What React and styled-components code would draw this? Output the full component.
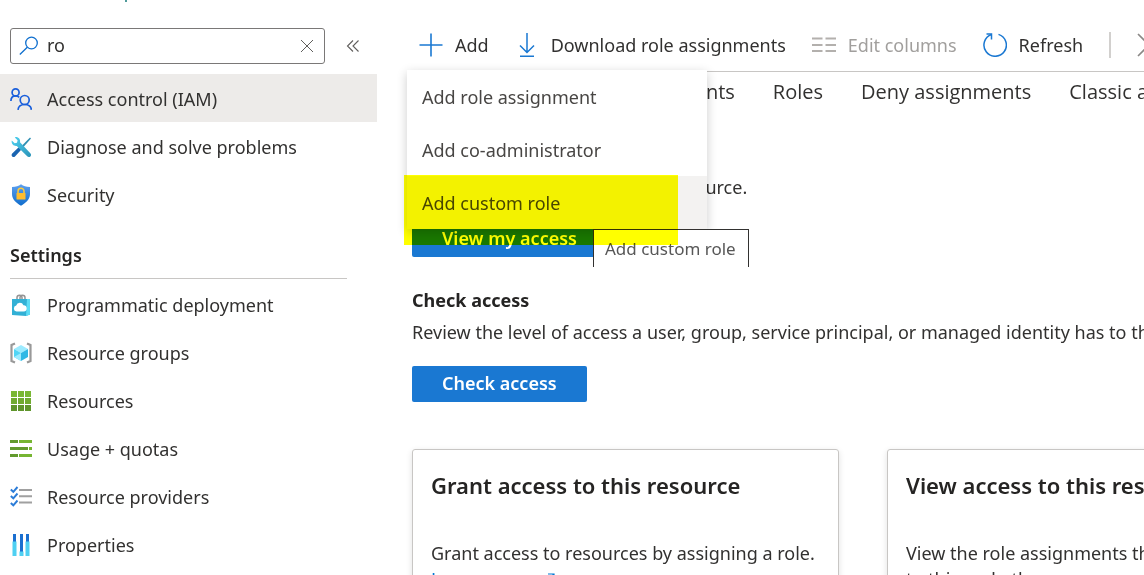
import { useState } from "react";
import styled, { createGlobalStyle } from "styled-components";

const GlobalStyle = createGlobalStyle`
  * {
    box-sizing: border-box;
  }
  body {
    margin: 0;
    background-color: #fff;
    color: #323130;
    font-family: "Noto Sans", "Open Sans", sans-serif;
    font-size: 18px;
    line-height: 26px;
  }
  button,
  input {
    font: inherit;
    color: inherit;
  }
  svg {
    display: block;
    flex: none;
  }
`;

const Page = styled.div`
  display: flex;
  height: 100vh;
  overflow: hidden;
`;

const Sidebar = styled.aside`
  flex: none;
  width: 377px;
`;

const TopEdge = styled.div`
  height: 28px;
  padding-left: 125px;
  &::before {
    content: "";
    display: block;
    width: 2px;
    height: 2px;
    background-color: #4f9a9a;
  }
`;

const SearchRow = styled.div`
  display: flex;
  align-items: center;
  gap: 21px;
  padding-left: 10px;
  margin-bottom: 10px;
`;

const SearchBox = styled.label`
  display: flex;
  align-items: center;
  width: 315px;
  height: 36px;
  padding: 0 10px 0 8px;
  border: 1px solid #7a7877;
  border-radius: 3px;
`;

const SearchInput = styled.input`
  flex: 1;
  min-width: 0;
  padding: 0 0 2px 8px;
  border: none;
  outline: none;
  background: none;
`;

const IconButton = styled.button`
  display: flex;
  padding: 0;
  border: none;
  background: none;
  cursor: pointer;
`;

const NavList = styled.ul`
  margin: 0;
  padding: 0;
  list-style: none;
`;

const NavLink = styled.a`
  display: flex;
  align-items: center;
  gap: 15px;
  height: 48px;
  padding: 1px 0 0 10px;
  color: inherit;
  text-decoration: none;
  background-color: ${(props) => (props.$active ? "#edebe9" : "transparent")};
`;

const NavHeading = styled.h2`
  margin: 0 30px 1px 10px;
  padding: 24px 0 10px;
  border-bottom: 1px solid #c8c6c4;
  font-size: 18px;
  font-weight: 600;
  line-height: 26px;
  color: #252423;
`;

const Main = styled.main`
  position: relative;
  flex: 1;
  min-width: 0;
  overflow: hidden;
  padding: 20px 0 0 35px;
`;

const Toolbar = styled.div`
  display: flex;
  align-items: center;
  gap: 26px;
  height: 52px;
  padding: 0 0 2px 7px;
  border-bottom: 1px solid #c8c6c4;
`;

const ToolButton = styled.button`
  display: flex;
  flex: none;
  align-items: center;
  gap: 12px;
  padding: 0;
  border: none;
  background: none;
  white-space: nowrap;
  cursor: pointer;
  &:disabled {
    color: #a19f9d;
    cursor: default;
  }
`;

const ToolDivider = styled.span`
  flex: none;
  width: 2px;
  height: 26px;
  background-color: #d2d0ce;
`;

const Tabs = styled.nav`
  display: flex;
  gap: 38px;
  height: 40px;
  align-items: center;
`;

const Tab = styled.a`
  flex: none;
  color: inherit;
  text-decoration: none;
  white-space: nowrap;
  font-family: "Open Sans", sans-serif;
  font-size: 20px;
`;

const Section = styled.section`
  padding-top: 30px;
`;

const SectionTitle = styled.h3`
  margin: 0 0 6px;
  font-size: 18px;
  font-weight: 700;
  line-height: 26px;
  color: #252423;
`;

const SectionText = styled.p`
  margin: 0 0 21px;
  white-space: nowrap;
`;

const PrimaryButton = styled.button`
  height: 36px;
  padding: 0 30px 2px;
  border: none;
  border-radius: 2px;
  background-color: #1a78d2;
  color: #fff;
  font-weight: 600;
  white-space: nowrap;
  cursor: pointer;
`;

const Cards = styled.div`
  display: flex;
  gap: 48px;
  padding-top: 47px;
`;

const Card = styled.article`
  flex: none;
  width: 427px;
  height: 240px;
  padding: 19px 18px;
  border: 1px solid #c8c6c4;
  border-radius: 3px;
  box-shadow: 0 2px 6px rgba(0, 0, 0, 0.12);
`;

const CardTitle = styled.h3`
  margin: 0 0 39px;
  font-size: 22px;
  font-weight: 600;
  line-height: 32px;
  white-space: nowrap;
  color: #252423;
`;

const CardText = styled.p`
  margin: 0;
`;

const CardLink = styled.a`
  display: flex;
  align-items: center;
  gap: 14px;
  color: #0078d4;
  text-decoration: none;
`;

const Menu = styled.div`
  position: absolute;
  top: 70px;
  left: 30px;
  width: 300px;
  background-color: #fff;
  box-shadow: 0 3px 10px rgba(0, 0, 0, 0.2);
`;

const MenuItem = styled.button`
  display: block;
  width: 100%;
  height: 53px;
  padding: 0 15px;
  border: none;
  color: #484644;
  text-align: left;
  cursor: pointer;
  background-color: ${(props) => (props.$active ? "#f3f2f1" : "#fff")};
`;

const Tooltip = styled.div`
  position: absolute;
  top: 229px;
  left: 216px;
  width: 156px;
  height: 38px;
  padding: 6px 0 0 11px;
  border: 1px solid #323130;
  border-bottom: none;
  background-color: #fff;
  color: #575757;
  font-size: 17px;
  white-space: nowrap;
`;

const Marker = styled.div`
  position: absolute;
  top: 175px;
  left: 27px;
  width: 274px;
  height: 70px;
  background-color: #ff0;
  mix-blend-mode: multiply;
  pointer-events: none;
`;

const SearchIcon = () => (
  <svg width="20" height="20" viewBox="0 0 20 20" fill="none" stroke="#0f6fce" strokeWidth="1.3">
    <circle cx="12.5" cy="7" r="5.8" />
    <path d="M8.3 11.2L.8 18.5" />
  </svg>
);

const ClearIcon = () => (
  <svg width="14" height="14" viewBox="0 0 14 14" fill="none" stroke="#605e5c" strokeWidth="1">
    <path d="M1 1l12 12M13 1L1 13" />
  </svg>
);

const CollapseIcon = () => (
  <svg width="14" height="14" viewBox="0 0 14 14" fill="none" stroke="#605e5c" strokeWidth="1.1">
    <path d="M7 1.5L1.5 7 7 12.5M12.5 1.5L7 7l5.5 5.5" />
  </svg>
);

const PeopleIcon = () => (
  <svg width="22" height="22" viewBox="0 0 22 22" fill="none" stroke="#1a5fdb" strokeWidth="1.7">
    <circle cx="5.6" cy="4.4" r="3.5" />
    <path d="M.9 13C1 9.7 3 7.9 5.6 7.9c1.5 0 2.7.5 3.6 1.4" />
    <circle cx="14.7" cy="12" r="4.5" />
    <path d="M8 21.8c.3-3.3 3-5.3 6.7-5.3s6.4 2 6.7 5.3" />
  </svg>
);

const ToolsIcon = () => (
  <svg width="22" height="22" viewBox="0 0 22 22">
    <defs>
      <linearGradient id="wrench" x1="0" y1="0" x2="1" y2="1">
        <stop offset="0" stopColor="#4fd3f2" />
        <stop offset="1" stopColor="#2b93b8" />
      </linearGradient>
    </defs>
    <path d="M20 1.5l1 1-7.7 8.7-1.5-1.5z" fill="#2f8fb3" />
    <path d="M8.7 11.2l2.5 2.5-6.2 6.7c-.8.8-2 .8-2.8 0s-.8-2 0-2.8z" fill="#1b64b0" />
    <path
      d="M5.6.9c2.9-.2 5.1 2.4 4.4 5.4l10.3 10.9c1 1 1 2.3.1 3.2s-2.300.9-3.200-.1L6.800 9.900C4 10.400 1.500 8.300 1.600 5.300l.2-.9 2.900 2.800 2.300-.5.600-2.400L4.800 1.400z"
      fill="url(#wrench)"
    />
  </svg>
);

const ShieldIcon = () => (
  <svg width="22" height="22" viewBox="0 0 22 22">
    <defs>
      <linearGradient id="shield" x1="0" y1="0" x2="0" y2="1">
        <stop offset="0" stopColor="#5ea0ef" />
        <stop offset="1" stopColor="#0f6dcc" />
      </linearGradient>
    </defs>
    <path
      d="M11 .3c2.5 1.8 5 2.5 9 2.6v7.2c0 5.5-4.5 9-9 11.7-4.5-2.7-9-6.2-9-11.7V2.900C6 2.800 8.500 2.100 11 .3z"
      fill="url(#shield)"
    />
    <path d="M8 9.5V7.2a3 3 0 0 1 6 0v2.3" fill="none" stroke="#ffca3a" strokeWidth="1.5" />
    <rect x="6.5" y="9" width="9" height="6.5" rx=".6" fill="#ffbd2e" />
  </svg>
);

const BagIcon = () => (
  <svg width="22" height="22" viewBox="0 0 22 22">
    <path d="M7 6V3.5C7 .4 12 .4 12 3.5V6M10 6V3.5c0-3.1 5-3.1 5 0V6" fill="none" stroke="#949494" strokeWidth="1.5" />
    <path d="M2 5h18v15.500L16 22 2 21z" fill="#32b0d5" />
    <path d="M17 5h3v15.500L16 22z" fill="#5cdcf5" />
    <path d="M6.500 17.500a3 3 0 0 1-.3-5.900 3.800 3.800 0 0 1 7.200-.3 3.100 3.100 0 0 1 .4 6.200z" fill="#fff" />
  </svg>
);

const GroupIcon = () => (
  <svg width="22" height="22" viewBox="0 0 22 22">
    <path d="M5 1.500L1.500 3v16L5 20.500M17 1.500L20.500 3v16L17 20.500" fill="none" stroke="#999" strokeWidth="2.2" />
    <path d="M11 3l7 4-7 4-7-4z" fill="#9cebff" />
    <path d="M4 7l7 4v8l-7-4z" fill="#50d5f5" />
    <path d="M18 7l-7 4v8l7-4z" fill="#32b8e5" />
    <path d="M4 15l7-4v8z" fill="#9cebff" />
  </svg>
);

const GridIcon = () => (
  <svg width="22" height="22" viewBox="0 0 22 22">
    <path d="M1 1h6v6H1zM8 1h6v6H8zM15 1h6v6h-6z" fill="#79b733" />
    <path d="M1 8h6v6H1zM8 8h6v6H8zM15 8h6v6h-6z" fill="#70aa30" />
    <path d="M1 15h6v6H1zM8 15h6v6H8zM15 15h6v6h-6z" fill="#5f952c" />
  </svg>
);

const QuotaIcon = () => (
  <svg width="22" height="22" viewBox="0 0 22 22">
    <path d="M0 2h8v3H0zM0 9h18v3H0zM0 16h8v3H0z" fill="#629a2d" />
    <path d="M9 2h13v3H9zM19 9h3v3h-3zM9 16h13v3H9z" fill="#76b532" />
  </svg>
);

const ProvidersIcon = () => (
  <svg width="22" height="22" viewBox="0 0 22 22" fill="none">
    <path d="M.8 3.500l2.500 2.300L7.500 1M.8 10l2.500 2.300 4.200-4.800M.8 17l2.500 2.300 4.200-4.800" stroke="#2b7cd8" strokeWidth="1.9" />
    <path d="M9 4h13M9 10.200h13M9 16.500h13" stroke="#a0a0a0" strokeWidth="2" />
  </svg>
);

const PropertiesIcon = () => (
  <svg width="22" height="22" viewBox="0 0 22 22">
    <path d="M3 0h3v8H3zM10 0h3v18h-3zM16 0h3v8h-3z" fill="#1a6fd0" />
    <path d="M2.500 7.500h4V22h-4zM9.500 17.500h4V22h-4zM15.500 7.500h4V22h-4z" fill="#4fd0f2" />
  </svg>
);

const PlusIcon = () => (
  <svg width="24" height="24" viewBox="0 0 24 24" fill="none" stroke="#1a78d2" strokeWidth="1.6">
    <path d="M12 .5v23M.5 12h23" />
  </svg>
);

const DownloadIcon = () => (
  <svg width="24" height="24" viewBox="0 0 24 24" fill="none" stroke="#1a78d2" strokeWidth="1.5">
    <path d="M12 0v19M5 12.500l7 7 7-7M5 23.200h14" />
  </svg>
);

const ColumnsIcon = () => (
  <svg width="24" height="24" viewBox="0 0 24 24" fill="none" stroke="#b3b0ad" strokeWidth="1.8">
    <path d="M0 5.500h10.500M13.500 5.500H24M0 12h10.500M13.500 12H24M0 18h10.500M13.500 18H24" />
  </svg>
);

const RefreshIcon = () => (
  <svg width="24" height="24" viewBox="0 0 24 24" fill="none" stroke="#1a78d2" strokeWidth="1.5">
    <path d="M15.500 1.400A11.200 11.200 0 1 1 8.500 1.500" />
    <path d="M3.500 1h5v5.500" />
  </svg>
);

const ChevronIcon = () => (
  <svg width="14" height="26" viewBox="0 0 14 26" fill="none" stroke="#8a8886" strokeWidth="1.6">
    <path d="M1 2l11 11L1 24" />
  </svg>
);

const ExternalIcon = () => (
  <svg width="12" height="12" viewBox="0 0 12 12" fill="none" stroke="#0078d4" strokeWidth="1.2">
    <path d="M5 1h6v6M11 1L4 8M3 4H1v7h7V9" />
  </svg>
);

const topLinks = [
  { label: "Access control (IAM)", Icon: PeopleIcon, active: true },
  { label: "Diagnose and solve problems", Icon: ToolsIcon },
  { label: "Security", Icon: ShieldIcon },
];

const settingsLinks = [
  { label: "Programmatic deployment", Icon: BagIcon },
  { label: "Resource groups", Icon: GroupIcon },
  { label: "Resources", Icon: GridIcon },
  { label: "Usage + quotas", Icon: QuotaIcon },
  { label: "Resource providers", Icon: ProvidersIcon },
  { label: "Properties", Icon: PropertiesIcon },
];

const tabs = ["Check access", "Role assignments", "Roles", "Deny assignments", "Classic administrators"];

const menuItems = ["Add role assignment", "Add co-administrator", "Add custom role"];

const NavLinks = ({ links }) => (
  <NavList>
    {links.map(({ label, Icon, active }) => (
      <li key={label}>
        <NavLink href="#" $active={active}>
          <Icon />
          {label}
        </NavLink>
      </li>
    ))}
  </NavList>
);

const App = () => {
  const [search, setSearch] = useState("ro");

  return (
    <Page>
      <GlobalStyle />
      <Sidebar>
        <TopEdge />
        <SearchRow>
          <SearchBox>
            <SearchIcon />
            <SearchInput
              type="text"
              aria-label="Search"
              value={search}
              onChange={(e) => setSearch(e.target.value)}
            />
            <IconButton aria-label="Clear" onClick={() => setSearch("")}>
              <ClearIcon />
            </IconButton>
          </SearchBox>
          <IconButton aria-label="Collapse">
            <CollapseIcon />
          </IconButton>
        </SearchRow>
        <NavLinks links={topLinks} />
        <NavHeading>Settings</NavHeading>
        <NavLinks links={settingsLinks} />
      </Sidebar>

      <Main>
        <Toolbar>
          <ToolButton>
            <PlusIcon />
            Add
          </ToolButton>
          <ToolButton>
            <DownloadIcon />
            Download role assignments
          </ToolButton>
          <ToolButton disabled>
            <ColumnsIcon />
            Edit columns
          </ToolButton>
          <ToolButton>
            <RefreshIcon />
            Refresh
          </ToolButton>
          <ToolDivider />
          <IconButton aria-label="More">
            <ChevronIcon />
          </IconButton>
        </Toolbar>

        <Tabs>
          {tabs.map((tab) => (
            <Tab key={tab} href="#">
              {tab}
            </Tab>
          ))}
        </Tabs>

        <Section>
          <SectionTitle>My access</SectionTitle>
          <SectionText>View my level of access to this resource.</SectionText>
          <PrimaryButton>View my access</PrimaryButton>
        </Section>

        <Section>
          <SectionTitle>Check access</SectionTitle>
          <SectionText>
            Review the level of access a user, group, service principal, or managed identity has to this resource.
          </SectionText>
          <PrimaryButton>Check access</PrimaryButton>
        </Section>

        <Cards>
          <Card>
            <CardTitle>Grant access to this resource</CardTitle>
            <CardText>Grant access to resources by assigning a role.</CardText>
            <CardLink href="#">
              Learn more
              <ExternalIcon />
            </CardLink>
          </Card>
          <Card>
            <CardTitle>View access to this resource</CardTitle>
            <CardText>View the role assignments that grant access to this and other resources.</CardText>
          </Card>
        </Cards>

        <Menu role="menu">
          {menuItems.map((item, i) => (
            <MenuItem key={item} role="menuitem" $active={i === 2}>
              {item}
            </MenuItem>
          ))}
        </Menu>
        <Tooltip role="tooltip">Add custom role</Tooltip>
        <Marker />
      </Main>
    </Page>
  );
};

export default App;
